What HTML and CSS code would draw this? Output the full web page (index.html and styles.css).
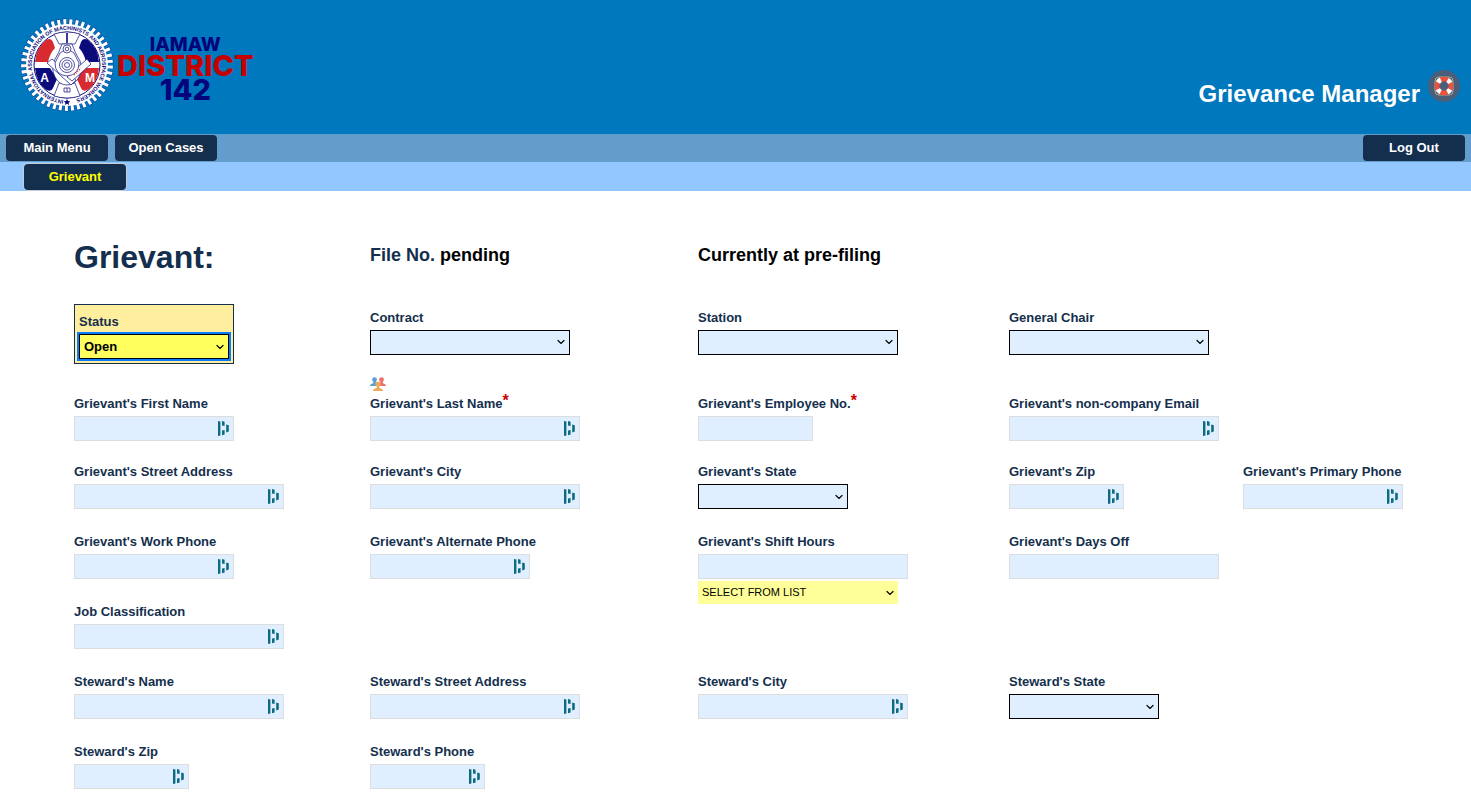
FILE: index.html
```html
<!doctype html>
<html lang="en">
    <head>
        <meta charset="utf-8">
        <title>Grievance Manager</title>
        <meta name="viewport" content="width=device-width, initial-scale=1"/>
        <link rel="stylesheet" href="styles.css">
    </head>
    <body>
        <header class="banner">
            <div class="logo">
                <svg class="seal" viewBox="-94 -94 188 188" aria-hidden="true">
                    <defs>
                        <path id="ring" d="M -7 70 A 70.4 70.4 0 1 1 7 70"/>
                    </defs>
                    <g transform="scale(2)">
                        <!-- gear -->
                        <circle r="43.2" fill="none" stroke="#0a3f9c" stroke-width="6.4" stroke-dasharray="4 2.032"/>
                        <circle r="43" fill="none" stroke="#fff" stroke-width="5.8" stroke-dasharray="3 3.004" stroke-dashoffset="-.5"/>
                        <circle r="41" fill="#fff"/>
                        <circle r="33" fill="#fff" stroke="#0b0b7c" stroke-width="1"/>
                        <path fill="#0b0b7c" d="M0 34l1 2 2.300.2-1.700 1.500.5 2.200-2.100-1.100-2.100 1.100.5-2.200-1.700-1.500 2.300-.2z"/>
                        <!-- quadrants -->
                        <path fill="#d92b2f" d="M-32-3Q-31-17-21-25Q-16-28-14-23L-12-17Q-17-12-19-3z"/>
                        <path fill="#0b0b7c" d="M32-3Q31-17 21-25Q16-28 14-23L12-17Q17-12 19-3z"/>
                        <path fill="#0b0b7c" d="M-32 3Q-31 16-22 24Q-16 28-14 23L-10 14L-17 3z"/>
                        <path fill="#d92b2f" d="M32 3Q31 16 22 24Q16 28 14 23L10 14L17 3z"/>
                        <!-- square, calipers and compass -->
                        <g fill="#fff" stroke="#0b0b7c" stroke-width=".7">
                            <path d="M-13-31Q0-35 13-31L8-21H-8z"/>
                            <path d="M-13 31Q0 35 13 31L8 18H-8z"/>
                            <path d="M-5-21Q-8-12-13-4Q-16 4-12 12Q-8 20 0 20T12 12Q16 4 13-4Q8-12 5-21z"/>
                            <path d="M-20-2l5-4L9 15l-5 5z"/>
                            <path d="M20-6l4 5L5 16l-5-4z"/>
                            <path d="M-7-12Q0-18 7-12L12-2Q12 10 0 11Q-12 10-12-2z"/>
                            <path stroke-width="1.6" d="M0-32V-22"/>
                            <circle cy="-16" r="4"/>
                            <circle cy="-16" r="1.8"/>
                            <circle r="7.5"/>
                            <circle r="5"/>
                            <circle r="2.5"/>
                            <path d="M-3 23h6v4h-6zM0 23v4" fill="none"/>
                        </g>
                        <path stroke="#d92b2f" stroke-width="1.4" stroke-dasharray="1 1.4" d="M7 10L14 3"/>
                    </g>
                    <text class="seal-text"><textPath href="#ring">INTERNATIONAL ASSOCIATION OF MACHINISTS AND AEROSPACE WORKERS</textPath></text>
                    <text class="seal-letter" x="-45" y="33">A</text>
                    <text class="seal-letter" x="46" y="33">M</text>
                </svg>
                <div class="logo-name">
                    <span class="logo-union">IAMAW</span>
                    <span class="logo-district">DISTRICT</span>
                    <span class="logo-number">142</span>
                </div>
            </div>
            <div class="app-title">
                <span>Grievance Manager</span>
                <a class="help" href="#" aria-label="Help">
                    <svg width="32" height="32" viewBox="-16 -16 32 32">
                        <circle r="16" fill="#4b5e7a"/>
                        <rect x="-9" y="-9" width="18" height="18" rx="4" fill="none" stroke="#b5b28b" stroke-width=".9"/>
                        <circle r="7" fill="none" stroke="#f0503c" stroke-width="4.6"/>
                        <circle r="7" fill="none" stroke="#fff" stroke-width="4.8" stroke-dasharray="4 6.996" stroke-dashoffset="-3.498"/>
                    </svg>
                </a>
            </div>
        </header>
        <nav class="menu">
            <button type="button" class="menu-button">Main Menu</button>
            <button type="button" class="menu-button">Open Cases</button>
            <button type="button" class="menu-button menu-button--right">Log Out</button>
        </nav>
        <nav class="menu menu--sub">
            <button type="button" class="menu-button menu-button--current">Grievant</button>
        </nav>
        <main>
            <div class="row row--title">
                <h1>Grievant:</h1>
                <h2><span class="caption">File No.</span> pending</h2>
                <h2>Currently at pre-filing</h2>
            </div>
            <form>
                <div class="row row--case">
                    <div class="field status">
                        <label for="status">Status</label>
                        <select id="status" class="w150"><option>Open</option><option>Closed</option></select>
                    </div>
                    <div class="field">
                        <label for="contract">Contract</label>
                        <select id="contract" class="w200"><option></option></select>
                    </div>
                    <div class="field">
                        <label for="station">Station</label>
                        <select id="station" class="w200"><option></option></select>
                    </div>
                    <div class="field">
                        <label for="chair">General Chair</label>
                        <select id="chair" class="w200"><option></option></select>
                    </div>
                </div>
                <div class="row row--name">
                    <div class="field">
                        <label for="first-name">Grievant's First Name</label>
                        <input id="first-name" type="text" class="w160 autofill">
                    </div>
                    <div class="field">
                        <a class="people" href="#" aria-label="Multiple grievants">
                            <svg width="16" height="16" viewBox="0 0 16 16">
                                <circle cx="4.5" cy="3.6" r="2.4" fill="#5b9fd0"/>
                                <path fill="#5b9fd0" d="M0 10q0-2 3.3-2.7V5h2.6v2.3Q8 8 8 10z"/>
                                <circle cx="11.5" cy="3.6" r="2.4" fill="#ee6f6c"/>
                                <path fill="#ee6f6c" d="M8 10q0-2 2.3-2.7V5h2.6v2.3Q16 8 16 10z"/>
                                <circle cx="8" cy="8" r="2.6" fill="#eda95c"/>
                                <path fill="#eda95c" d="M3 15q0-2.4 3.7-3V9h2.6v3Q13 12.6 13 15z"/>
                            </svg>
                        </a>
                        <label for="last-name">Grievant's Last Name<span class="required">*</span></label>
                        <input id="last-name" type="text" class="w210 autofill" required>
                    </div>
                    <div class="field">
                        <label for="employee-no">Grievant's Employee No.<span class="required">*</span></label>
                        <input id="employee-no" type="text" class="w115" required>
                    </div>
                    <div class="field">
                        <label for="email">Grievant's non-company Email</label>
                        <input id="email" type="text" class="w210 autofill">
                    </div>
                </div>
                <div class="row">
                    <div class="field">
                        <label for="street">Grievant's Street Address</label>
                        <input id="street" type="text" class="w210 autofill">
                    </div>
                    <div class="field">
                        <label for="city">Grievant's City</label>
                        <input id="city" type="text" class="w210 autofill">
                    </div>
                    <div class="field">
                        <label for="state">Grievant's State</label>
                        <select id="state" class="w150"><option></option></select>
                    </div>
                    <div class="field">
                        <label for="zip">Grievant's Zip</label>
                        <input id="zip" type="text" class="w115 autofill">
                    </div>
                    <div class="field">
                        <label for="primary-phone">Grievant's Primary Phone</label>
                        <input id="primary-phone" type="text" class="w160 autofill">
                    </div>
                </div>
                <div class="row">
                    <div class="field">
                        <label for="work-phone">Grievant's Work Phone</label>
                        <input id="work-phone" type="text" class="w160 autofill">
                    </div>
                    <div class="field">
                        <label for="alt-phone">Grievant's Alternate Phone</label>
                        <input id="alt-phone" type="text" class="w160 autofill">
                    </div>
                    <div class="field">
                        <label for="shift">Grievant's Shift Hours</label>
                        <input id="shift" type="text" class="w210">
                        <select class="w200 pick-list" aria-label="Shift hours list"><option>SELECT FROM LIST</option></select>
                    </div>
                    <div class="field">
                        <label for="days-off">Grievant's Days Off</label>
                        <input id="days-off" type="text" class="w210">
                    </div>
                </div>
                <div class="row">
                    <div class="field">
                        <label for="job">Job Classification</label>
                        <input id="job" type="text" class="w210 autofill">
                    </div>
                </div>
                <div class="row">
                    <div class="field">
                        <label for="steward-name">Steward's Name</label>
                        <input id="steward-name" type="text" class="w210 autofill">
                    </div>
                    <div class="field">
                        <label for="steward-street">Steward's Street Address</label>
                        <input id="steward-street" type="text" class="w210 autofill">
                    </div>
                    <div class="field">
                        <label for="steward-city">Steward's City</label>
                        <input id="steward-city" type="text" class="w210 autofill">
                    </div>
                    <div class="field">
                        <label for="steward-state">Steward's State</label>
                        <select id="steward-state" class="w150"><option></option></select>
                    </div>
                </div>
                <div class="row">
                    <div class="field">
                        <label for="steward-zip">Steward's Zip</label>
                        <input id="steward-zip" type="text" class="w115 autofill">
                    </div>
                    <div class="field">
                        <label for="steward-phone">Steward's Phone</label>
                        <input id="steward-phone" type="text" class="w115 autofill">
                    </div>
                </div>
            </form>
        </main>
    </body>
</html>
```
FILE: styles.css
```css
* {
    box-sizing: border-box;
}
body {
    margin: 0;
    background: #fff;
    color: #000;
    font-family: Arial, "Liberation Sans", sans-serif;
    font-size: 13px;
}

/* banner */
.banner {
    display: flex;
    justify-content: space-between;
    background: #0078bd;
    height: 134px;
    padding: 18px 11px 0 20px;
}
.logo {
    display: flex;
    align-items: flex-start;
    gap: 3px;
}
.seal {
    width: 94px;
    height: 94px;
}
.seal-text {
    fill: #0b0b7c;
    font-size: 11px;
    font-weight: bold;
}
.seal-letter {
    fill: #fff;
    font-size: 24px;
    font-weight: bold;
    text-anchor: middle;
}
.logo-name {
    display: flex;
    flex-direction: column;
    align-items: center;
    padding-top: 17px;
    font-family: Inter, sans-serif;
    font-weight: 800;
}
.logo-union {
    color: #04047c;
    font-size: 19px;
    line-height: 20px;
}
.logo-district {
    color: #c40000;
    font-size: 29px;
    line-height: 21px;
}
.logo-number {
    color: #04047c;
    font-size: 29px;
    line-height: 28px;
}
.app-title {
    display: flex;
    align-items: flex-start;
    gap: 8px;
    padding-top: 52px;
    color: #fff;
    font-size: 24px;
    font-weight: bold;
    line-height: 48px;
}
.help svg {
    display: block;
}

/* menus */
.menu {
    display: flex;
    gap: 7px;
    background: #629dcc;
    padding: 1px 6px;
}
.menu--sub {
    background: #92c8ff;
    padding: 2px 24px 1px;
}
.menu-button {
    width: 102px;
    height: 26px;
    padding: 0 0 2px;
    border: 0;
    border-radius: 4px;
    background: #142f4d;
    color: #fff;
    font: bold 13px Arial, "Liberation Sans", sans-serif;
}
.menu-button--right {
    margin-left: auto;
}
.menu-button--current {
    color: #ff0;
    box-shadow: 0 0 0 1px #c4cdd6;
}

/* form */
main {
    padding: 48px 68px 0 74px;
}
.row {
    display: grid;
    grid-template-columns: 296fr 328fr 311fr 234fr 160fr;
    align-items: start;
    min-height: 70px;
}
.row:last-child {
    min-height: 0;
}
.row--title {
    margin-bottom: 28px;
    min-height: 0;
}
.row--case {
    align-items: center;
    margin-bottom: 12px;
    min-height: 0;
}
.row--case .field {
    padding-bottom: 4px;
}
.row--name {
    align-items: end;
    margin-bottom: 23px;
    min-height: 0;
}
h1, h2 {
    margin: 0;
}
h1 {
    color: #142f4d;
    font-size: 32px;
    line-height: 37px;
}
h2 {
    font-size: 18px;
    line-height: 32px;
}
.caption {
    color: #142f4d;
}
.field {
    display: flex;
    flex-direction: column;
    align-items: flex-start;
}
label {
    margin-bottom: 5px;
    color: #142f4d;
    font-weight: bold;
    line-height: 15px;
    white-space: nowrap;
}
.required {
    color: #c00;
    font-size: 16px;
    line-height: 0;
    vertical-align: 2px;
}
.people {
    height: 20px;
}
input,
select {
    height: 25px;
    margin: 0;
    padding: 0 4px;
    border: 1px solid #ddd;
    border-radius: 0;
    background: #dfefff no-repeat;
    color: #000;
    font: bold 13px Arial, "Liberation Sans", sans-serif;
}
select {
    appearance: none;
    border-color: #000;
    background-image: url("data:image/svg+xml,%3Csvg xmlns='http://www.w3.org/2000/svg' width='8' height='6'%3E%3Cpath d='M1 1.5l3 3 3-3' fill='none' stroke='%23000' stroke-width='1.2' stroke-linecap='round'/%3E%3C/svg%3E");
    background-position: right 4px center;
}
.autofill {
    background-image: url("data:image/svg+xml,%3Csvg xmlns='http://www.w3.org/2000/svg' width='11' height='15'%3E%3Cpath d='M0 0l2.4.5v14l-2.4.5zM4 0l2.6.8v4.2l-2.6-.6zM4 9.600l2.6-.6v4.400l-2.600.8zM8.200 3.400l2.600.8v6.400l-2.600.8z' fill='%230e6a80'/%3E%3C/svg%3E");
    background-position: right 4px center;
}
.status {
    justify-self: start;
    padding: 9px 4px 4px;
    border: 1px solid #142f4d;
    background: #ffee9e;
}
.status select {
    background-color: #ffff5e;
    outline: 2px solid #0a7aff;
}
.pick-list {
    height: 23px;
    margin-top: 2px;
    padding: 0 4px 2px;
    border: 0;
    background-color: #ff9;
    font-size: 11px;
    font-weight: normal;
}
.w115 {
    width: 115px;
}
.w150 {
    width: 150px;
}
.w160 {
    width: 160px;
}
.w200 {
    width: 200px;
}
.w210 {
    width: 210px;
}
```
